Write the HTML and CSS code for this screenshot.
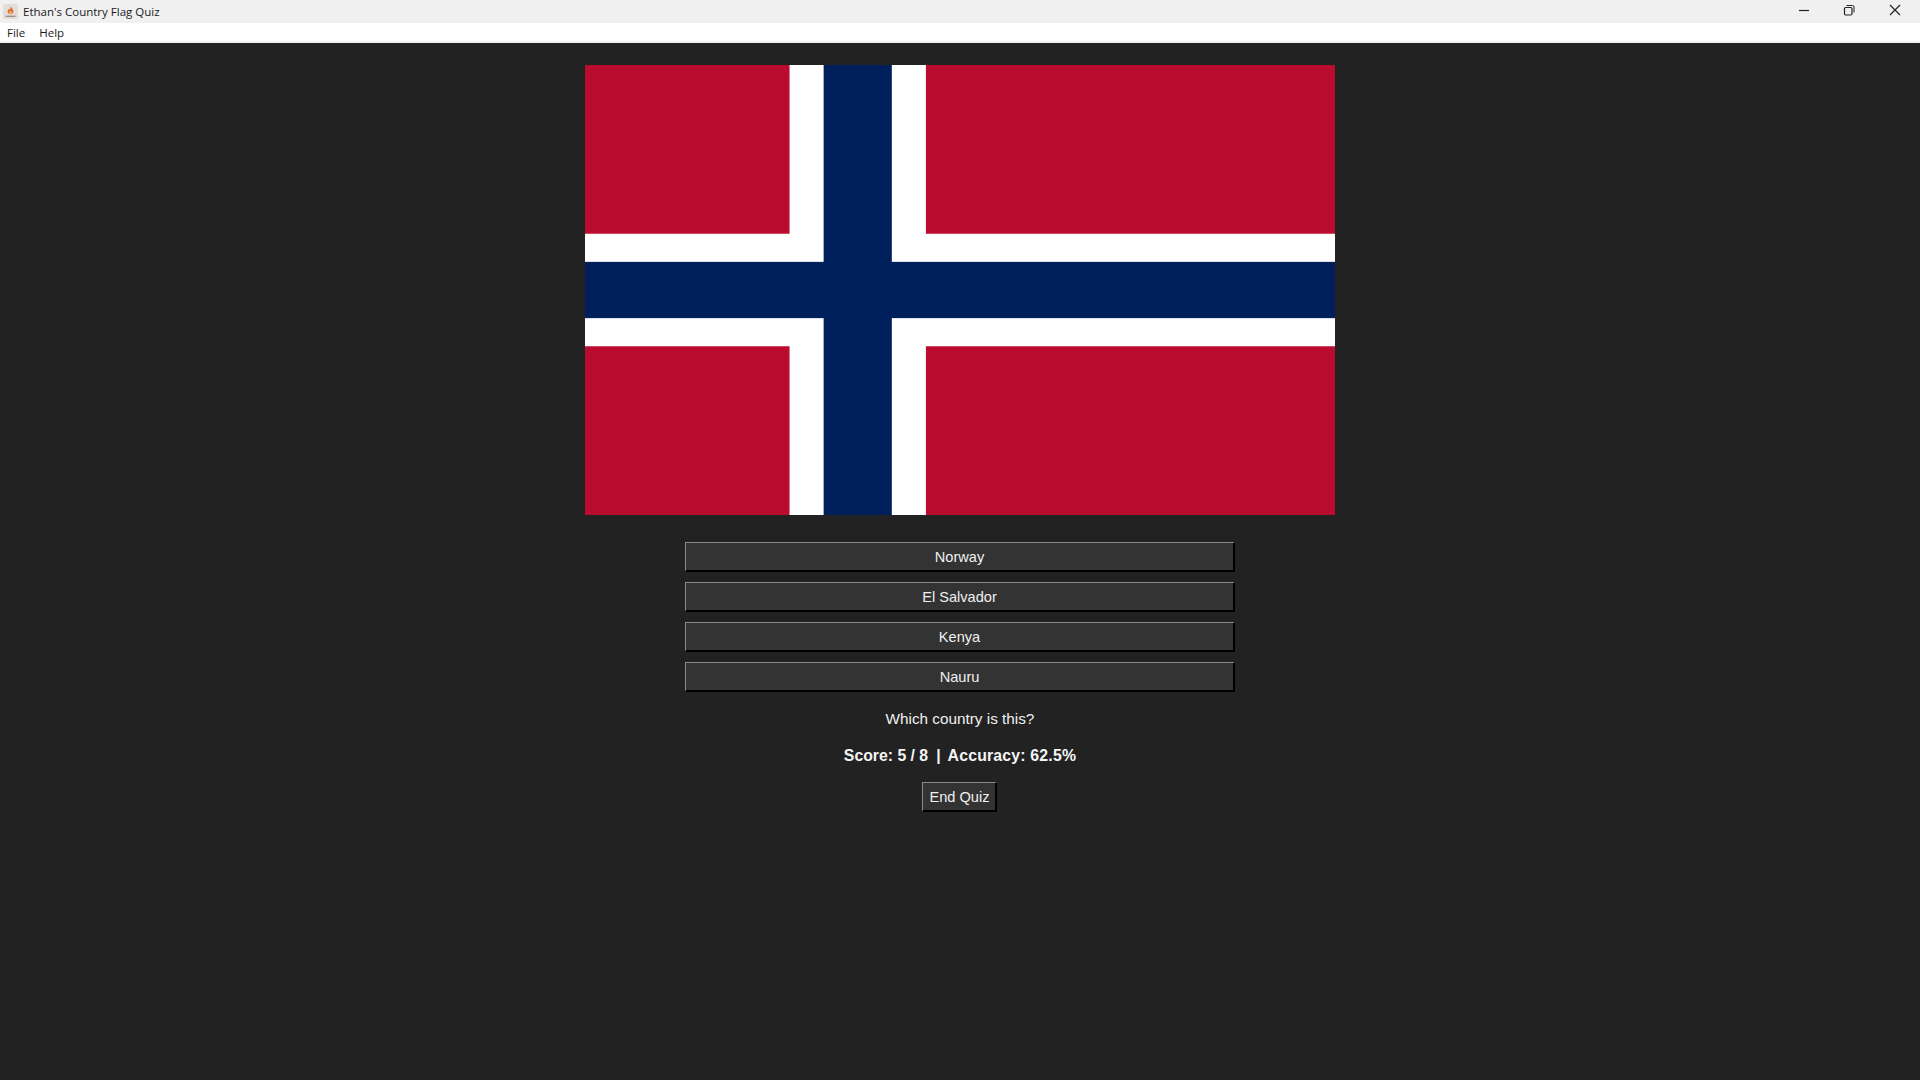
FILE: index.html
```
<!DOCTYPE html>
<html lang="en">
<head>
<meta charset="utf-8">
<title>Ethan's Country Flag Quiz</title>
<link rel="stylesheet" href="styles.css">
</head>
<body>
<div class="window">
  <header class="titlebar">
    <div class="title-left">
      <svg class="app-icon" viewBox="0 0 18 18" aria-hidden="true">
        <rect width="18" height="18" rx="1.5" fill="#e2ddd8"/>
        <path d="M9 2.5 C10 4.5 12.5 6 12.5 9 C12.5 11 11 12.3 9 12.3 C7 12.3 5.5 11 5.5 9 C5.5 7.5 6.5 6.8 6.8 5.6 C7.5 6 8 6.5 8.2 7 C8.8 5.8 9.2 4.2 9 2.5Z" fill="#e0703a"/>
        <path d="M7.5 10.5 C7.5 9.5 8.6 9 9 8 C9.4 9 10.5 9.5 10.5 10.5 C10.5 11.4 9.8 12 9 12 C8.2 12 7.5 11.4 7.5 10.5Z" fill="#f3c06a"/>
        <path d="M3 14 H15 V15.5 H3Z" fill="#8f8a84"/>
      </svg>
      <span class="title-text">Ethan's Country Flag Quiz</span>
    </div>
    <div class="window-controls">
      <svg class="win-btn" viewBox="0 0 46 23" aria-hidden="true"><path d="M19 10.5 H29" stroke="#222" stroke-width="1.2" fill="none"/></svg>
      <svg class="win-btn" viewBox="0 0 46 23" aria-hidden="true"><rect x="18.5" y="7.5" width="7.5" height="7.5" rx="1.2" stroke="#222" stroke-width="1.2" fill="none"/><path d="M20.5 5.5 H26.5 Q28 5.5 28 7 V12.5" stroke="#222" stroke-width="1" fill="none"/></svg>
      <svg class="win-btn" viewBox="0 0 46 23" aria-hidden="true"><path d="M18 5 L28 15 M28 5 L18 15" stroke="#222" stroke-width="1.2" fill="none"/></svg>
    </div>
  </header>
  <nav class="menubar">
    <span class="menu-item">File</span>
    <span class="menu-item">Help</span>
  </nav>
  <main class="quiz">
    <svg class="flag" viewBox="0 0 22 16" preserveAspectRatio="none" aria-label="Flag" role="img">
      <rect width="22" height="16" fill="#ba0c2f"/>
      <rect x="6" width="4" height="16" fill="#fff"/>
      <rect y="6" width="22" height="4" fill="#fff"/>
      <rect x="7" width="2" height="16" fill="#00205b"/>
      <rect y="7" width="22" height="2" fill="#00205b"/>
    </svg>
    <div class="answers">
      <button class="btn answer">Norway</button>
      <button class="btn answer">El Salvador</button>
      <button class="btn answer">Kenya</button>
      <button class="btn answer">Nauru</button>
    </div>
    <p class="prompt">Which country is this?</p>
    <p class="score"><span>Score: 5 / 8</span><span class="sep">|</span><span class="accuracy">Accuracy: 62.5%</span></p>
    <button class="btn end">End Quiz</button>
  </main>
</div>
</body>
</html>
```
FILE: styles.css
```
* { box-sizing: border-box; }
html, body { margin: 0; height: 100%; }
body { font-family: "Liberation Sans", Arial, sans-serif; background: #222222; overflow: hidden; }
.window { display: flex; flex-direction: column; height: 100vh; }
.titlebar { display: flex; justify-content: space-between; height: 23px; background: #f0f0f0; flex: none; }
.title-left { display: flex; align-items: center; padding-left: 3px; gap: 5px; }
.app-icon { width: 15px; height: 15px; }
.title-text { font-family: "Open Sans", "Noto Sans", sans-serif; font-size: 11.5px; color: #1a1a1a; }
.window-controls { display: flex; padding-right: 2px; }
.win-btn { width: 46px; height: 23px; display: block; }
.menubar { display: flex; height: 20px; background: #fff; border-bottom: 2px solid #f0f0f0; padding-left: 7px; gap: 14px; align-items: center; flex: none; }
.menu-item { font-family: "Open Sans", "Noto Sans", sans-serif; font-size: 11.5px; color: #1a1a1a; }
.quiz { flex: 1; display: flex; flex-direction: column; align-items: center; padding-top: 22px; }
.flag { width: 750px; height: 450px; display: block; flex: none; }
.answers { display: flex; flex-direction: column; gap: 10px; margin-top: 27px; }
.btn { font-family: "Liberation Sans", Arial, sans-serif; font-size: 14.6px; color: #f0f0f0; background: #333333; border: 2px solid; border-color: #8a8a8a #000 #000 #8a8a8a; border-width: 1px 2px 2px 1px; padding: 0; }
.answer { width: 550px; height: 30px; }
.prompt { margin: 17px 0 0; font-size: 15.3px; line-height: 20px; color: #f0f0f0; }
.score { display: flex; margin: 17px 0 0; font-size: 15.8px; line-height: 20px; font-weight: bold; color: #f5f5f5; }
.sep { margin: 0 7px 0 8px; }
.accuracy { letter-spacing: 0.2px; }
.end { width: 75px; height: 30px; margin-top: 16px; margin-right: 2px; padding-left: 2px; }
```
